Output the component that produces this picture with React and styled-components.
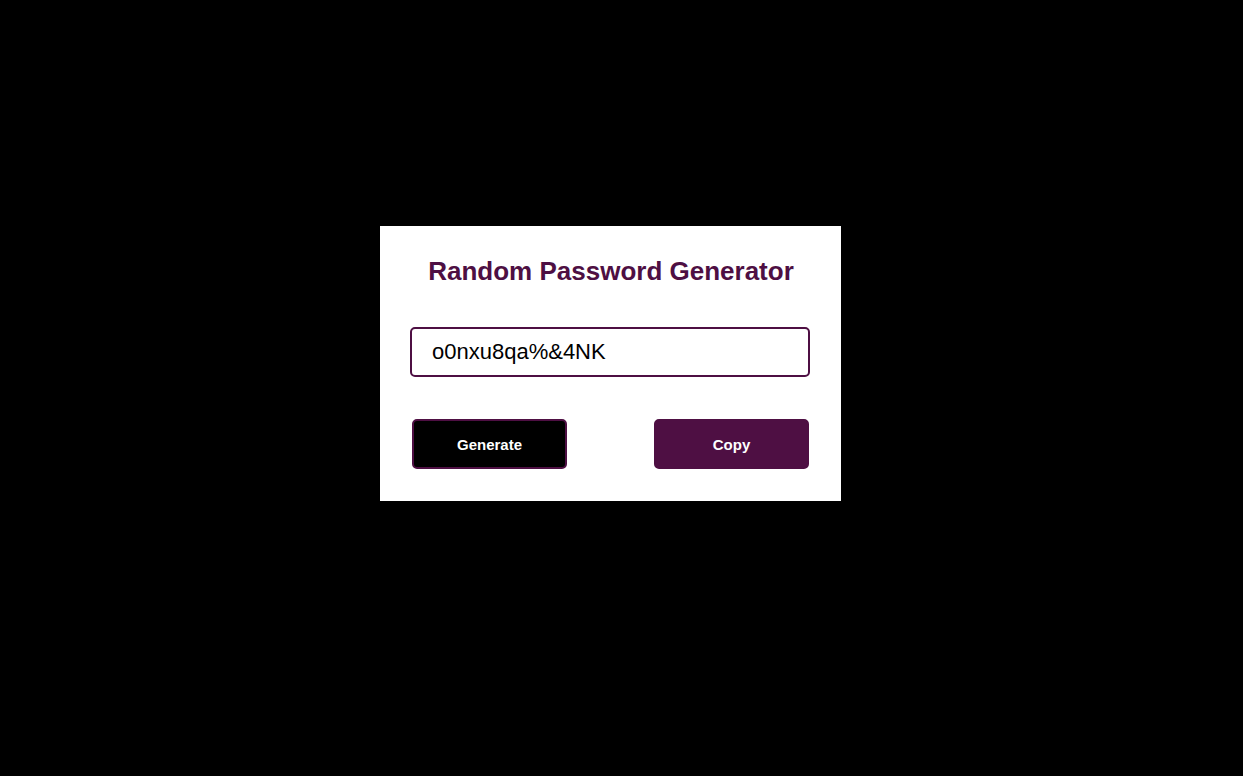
import React, { useState } from "react";
import styled, { createGlobalStyle } from "styled-components";

const Global = createGlobalStyle`
  html, body { margin: 0; padding: 0; background: #000; }
  body { font-family: "Liberation Sans", Arial, sans-serif; }
  * { box-sizing: border-box; }
`;

const Page = styled.div`
  min-height: 100vh;
  display: flex;
  align-items: center;
  justify-content: center;
  padding: 0 22px 49px 0;
  background: #000;
`;

const Card = styled.div`
  width: 461px;
  background: #fff;
  padding: 30px 30px 32px 30px;
  display: flex;
  flex-direction: column;
`;

const Title = styled.h1`
  margin: 0;
  font-size: 26px;
  line-height: 30px;
  font-weight: 700;
  color: #4e0f43;
  text-align: center;
  padding-left: 1px;
`;

const Field = styled.input`
  margin-top: 41px;
  width: 400px;
  height: 50px;
  border: 2px solid #4e0f43;
  border-radius: 5px;
  padding: 0 20px;
  font-family: "Liberation Sans", Arial, sans-serif;
  font-size: 22px;
  color: #000;
  outline: none;
  background: #fff;
`;

const Row = styled.div`
  margin-top: 42px;
  display: flex;
  justify-content: space-between;
  padding: 0 2px 0 2px;
`;

const Button = styled.button`
  width: 155px;
  height: 50px;
  border-radius: 5px;
  border: 2px solid #4e0f43;
  background: ${(p) => (p.$primary ? "#4e0f43" : "#000")};
  color: #fff;
  font-family: "Liberation Sans", Arial, sans-serif;
  font-weight: 700;
  font-size: 15px;
  cursor: pointer;
`;

export default function App() {
  const [pw] = useState("o0nxu8qa%&4NK");
  return (
    <>
      <Global />
      <Page>
        <Card>
          <Title>Random Password Generator</Title>
          <Field type="text" value={pw} readOnly />
          <Row>
            <Button>Generate</Button>
            <Button $primary>Copy</Button>
          </Row>
        </Card>
      </Page>
    </>
  );
}
